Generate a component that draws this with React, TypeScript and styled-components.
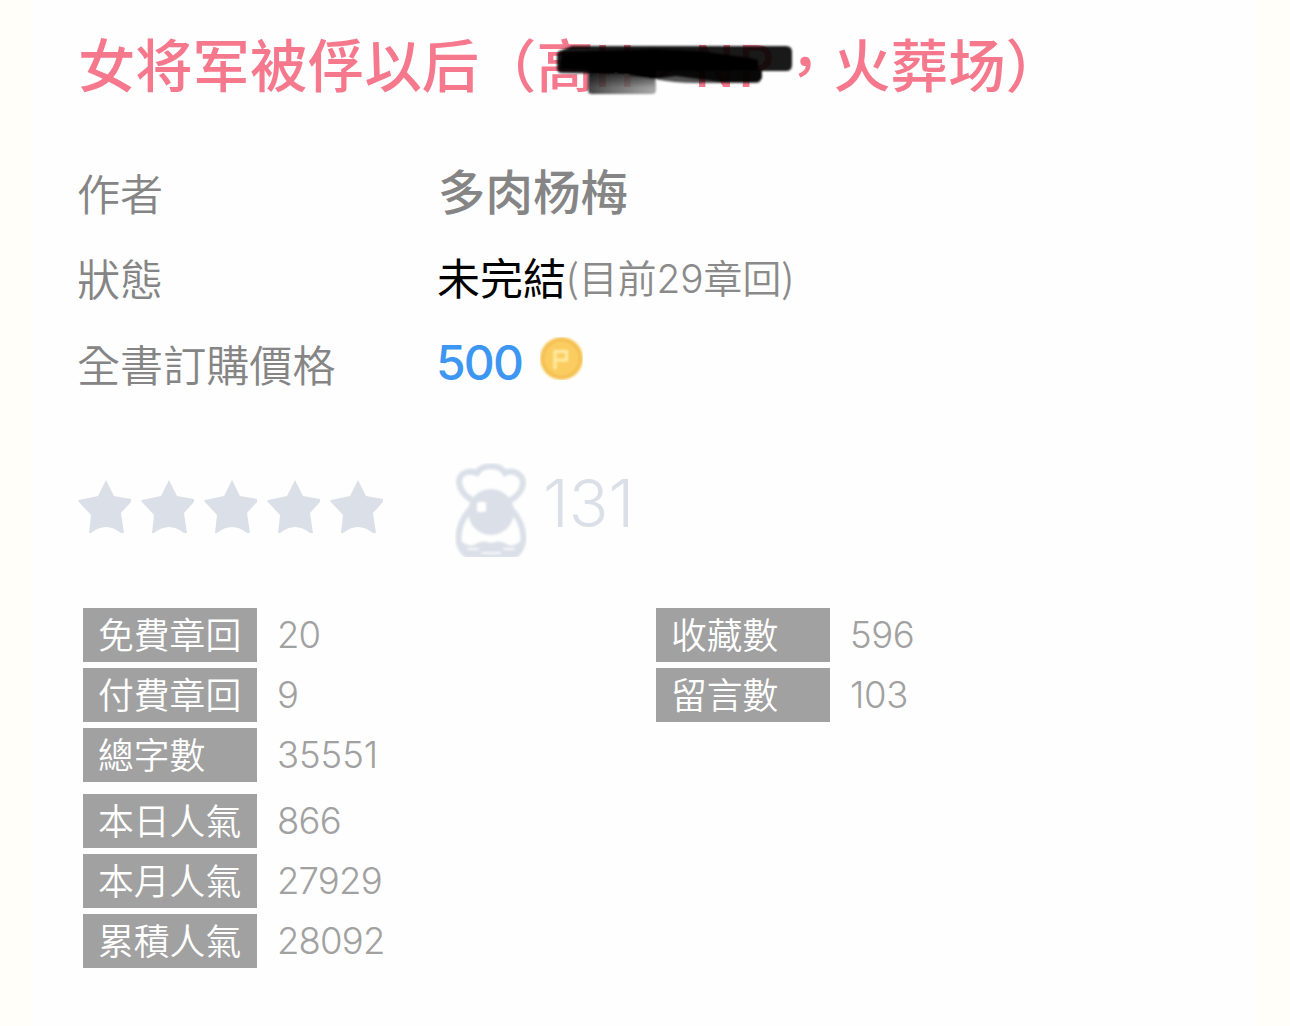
import { FC } from 'react';
import styled, { createGlobalStyle } from 'styled-components';

interface IStat {
  label: string;
  value: string;
  gap?: number;
  spacing?: number;
}

const mainStats: IStat[] = [
  { label: '免費章回', value: '20' },
  { label: '付費章回', value: '9' },
  { label: '總字數', value: '35551', gap: 12, spacing: -0.1 },
  { label: '本日人氣', value: '866' },
  { label: '本月人氣', value: '27929' },
  { label: '累積人氣', value: '28092' }
];

const sideStats: IStat[] = [
  { label: '收藏數', value: '596', spacing: -0.4 },
  { label: '留言數', value: '103', spacing: -0.3 }
];

const Scribble: FC = () => (
  <ScribbleSvg viewBox="0 0 260 70" width="260" height="70">
    <defs>
      <linearGradient id="smudge" x1="0" x2="1" y1="0" y2="0">
        <stop offset="0" stopColor="#222" />
        <stop offset="0.35" stopColor="#555" />
        <stop offset="1" stopColor="#999" />
      </linearGradient>
      <linearGradient id="shade" x1="0" x2="0" y1="0" y2="1">
        <stop offset="0" stopColor="#000" stopOpacity="0.8" />
        <stop offset="1" stopColor="#000" stopOpacity="0" />
      </linearGradient>
      <filter id="soft" x="-5%" y="-20%" width="110%" height="140%">
        <feGaussianBlur stdDeviation="1" />
      </filter>
    </defs>
    <g filter="url(#soft)">
      <path
        d="M38 30H106V50Q106 54 102 54H42Q38 54 38 50Z"
        fill="url(#smudge)"
        opacity="0.85"
      />
      <path d="M39 30H105V48H39Z" fill="url(#shade)" />
      <path
        d="M80 30H211V38Q211 43 206 43H145Q125 43 104 39L80 36Z"
        fill="#000"
        opacity="0.68"
      />
      <path
        d="M22 6H236Q242 6 242 12V25Q242 31 236 31H212V38Q210 42 204 42H170L126 36L103 39L78 34L12 33Q7 33 7 28V15Q7 11 12 10Z"
        fill="#000"
        opacity="0.9"
      />
      <path
        d="M12 12L104 9L150 11L200 18L208 20V30L140 31L60 31L10 29Z"
        fill="#000"
      />
    </g>
  </ScribbleSvg>
);

const Coin: FC = () => (
  <CoinSvg viewBox="0 0 43 43" width="43" height="43">
    <defs>
      <filter id="coinSoft">
        <feGaussianBlur stdDeviation="0.8" />
      </filter>
    </defs>
    <g filter="url(#coinSoft)">
      <circle cx="21.5" cy="21.5" r="21.5" fill="#f9cd62" />
      <circle
        cx="21.5"
        cy="21.5"
        r="18.5"
        fill="#fbcd60"
        stroke="#f4bf54"
        strokeWidth="3"
      />
      <path
        d="M15 32V14.500H26.500V23H16"
        fill="none"
        stroke="#ffeaa0"
        strokeWidth="3"
      />
    </g>
  </CoinSvg>
);

const Star: FC = () => (
  <svg viewBox="0 0 53 53" width="53" height="53">
    <path
      d="M28 0L36 16L53 19V22L43 33L46 53H43Q28 41 13 53H11L13 35L0 21L1 20L20 16Z"
      fill="#dbe0e8"
    />
  </svg>
);

const Mascot: FC = () => (
  <svg viewBox="0 0 72 94" width="72" height="94">
    <defs>
      <filter id="mascotSoft" x="-5%" y="-5%" width="110%" height="110%">
        <feGaussianBlur stdDeviation="0.8" />
      </filter>
    </defs>
    <g filter="url(#mascotSoft)">
      <g fill="none" stroke="#dbe0e8" strokeWidth="6">
        <path d="M17 37C9 33 4 25 4 18C5 9 15 7 22 10C27 1 45 1 50 10C58 6 67 11 68 19C68 27 62 34 54 38" />
        <path d="M17 45C7 54 2 68 4 80Q6 88 12 92H60Q66 88 68 79C70 67 64 54 55 45" />
      </g>
      <circle cx="36" cy="49" r="23" fill="#dbe0e8" />
      <rect x="22" y="39" width="9" height="10" rx="2" fill="#fff" />
      <path
        d="M4 76Q12 84 19 82Q27 76 36 80Q46 76 53 82Q60 84 68 76L69 82Q67 90 61 94H11Q5 90 3 82Z"
        fill="#dbe0e8"
      />
      <path
        d="M13 86H23M49 86H59M27 90H45"
        stroke="#fff"
        strokeWidth="1.500"
        strokeLinecap="round"
      />
    </g>
  </svg>
);

const StatList: FC<{ stats: IStat[] }> = ({ stats }) => (
  <StatColumn>
    {stats.map((stat) => (
      <StatRow key={stat.label} $gap={stat.gap}>
        <StatLabel>{stat.label}</StatLabel>
        <StatValue $spacing={stat.spacing}>{stat.value}</StatValue>
      </StatRow>
    ))}
  </StatColumn>
);

const App: FC = () => {
  return (
    <Page>
      <GlobalStyle />
      <Sheet>
        <Title>
          女将军被俘以后（高H，<Latin>NP</Latin>，火葬场）
          <Scribble />
        </Title>

        <Details>
          <DetailRow $height={84}>
            <DetailLabel>作者</DetailLabel>
            <Author>多肉杨梅</Author>
          </DetailRow>
          <DetailRow $height={86}>
            <DetailLabel>狀態</DetailLabel>
            <Status>未完結</Status>
            <Chapters>
              (目前<Digits>29</Digits>章回)
            </Chapters>
          </DetailRow>
          <DetailRow $height={86}>
            <DetailLabel>全書訂購價格</DetailLabel>
            <Price>500</Price>
            <Coin />
          </DetailRow>
        </Details>

        <Rating>
          <Stars>
            {[1, 2, 3, 4, 5].map((n) => (
              <Star key={n} />
            ))}
          </Stars>
          <Mascot />
          <Votes>131</Votes>
        </Rating>

        <Stats>
          <StatList stats={mainStats} />
          <StatList stats={sideStats} />
        </Stats>
      </Sheet>
    </Page>
  );
};

const GlobalStyle = createGlobalStyle`
  * {
    box-sizing: border-box;
  }

  body {
    margin: 0;
    background: #fffef8;
    font-family: 'Noto Sans CJK TC', sans-serif;
  }

  svg {
    display: block;
    flex: none;
  }
`;

const Page = styled.div`
  height: 1026px;
  padding: 0 33px 0 32px;
  overflow: hidden;
`;

const Sheet = styled.main`
  height: 100%;
  padding: 26px 0 0 46px;
  background: #fefefe;
`;

const Title = styled.h1`
  position: relative;
  height: 82px;
  margin: 0;
  color: #f5788d;
  font-size: 57.3px;
  font-weight: 500;
  line-height: 74px;
  white-space: nowrap;
`;

const Latin = styled.span`
  letter-spacing: 1.8px;
`;

const ScribbleSvg = styled.svg`
  position: absolute;
  top: 14px;
  left: 472px;
`;

const Details = styled.section`
  margin-top: 41px;
`;

const DetailRow = styled.div<{ $height: number }>`
  display: flex;
  align-items: center;
  height: ${(props) => props.$height}px;
  white-space: nowrap;
`;

const DetailLabel = styled.span`
  width: 360px;
  margin-left: -1px;
  padding-top: 1px;
  color: #858585;
  font-size: 43.1px;
  font-weight: 350;
`;

const Author = styled.span`
  margin: -3px 0 0 1px;
  color: #858585;
  font-size: 47.5px;
  font-weight: 500;
`;

const Status = styled.span`
  color: #000;
  font-size: 43px;
`;

const Chapters = styled.span`
  color: #8a8a8a;
  font-size: 38.8px;
  font-weight: 350;
`;

const Digits = styled.span`
  font-family: Inter, sans-serif;
  font-weight: 300;
`;

const Price = styled.span`
  margin-left: -1px;
  color: #3d97f2;
  font-family: Inter, sans-serif;
  font-size: 48px;
  font-weight: 500;
  letter-spacing: -1.8px;
`;

const CoinSvg = styled.svg`
  margin: -8px 0 0 18px;
`;

const Rating = styled.section`
  display: flex;
  height: 94px;
  margin-top: 58px;
`;

const Stars = styled.div`
  display: flex;
  gap: 10px;
  width: 377px;
  padding-top: 17px;
`;

const Votes = styled.span`
  margin-left: 16px;
  color: #dbe0e8;
  font-family: Inter, sans-serif;
  font-size: 65.5px;
  font-weight: 300;
  line-height: 82px;
`;

const Stats = styled.section`
  display: grid;
  grid-template-columns: 573px 1fr;
  padding: 51px 0 0 5px;
`;

const StatColumn = styled.div`
  display: flex;
  flex-direction: column;
`;

const StatRow = styled.div<{ $gap?: number }>`
  display: flex;
  align-items: center;
  height: 54px;
  margin-bottom: ${(props) => props.$gap ?? 6}px;
`;

const StatLabel = styled.span`
  width: 174px;
  height: 54px;
  padding-left: 15px;
  background: #a1a1a1;
  color: #fff;
  font-size: 35.8px;
  font-weight: 350;
  line-height: 50px;
`;

const StatValue = styled.span<{ $spacing?: number }>`
  margin-left: 20px;
  color: #a1a1a1;
  font-family: Inter, sans-serif;
  font-size: 36.5px;
  font-weight: 300;
  letter-spacing: ${(props) => props.$spacing ?? -0.8}px;
`;

export default App;
